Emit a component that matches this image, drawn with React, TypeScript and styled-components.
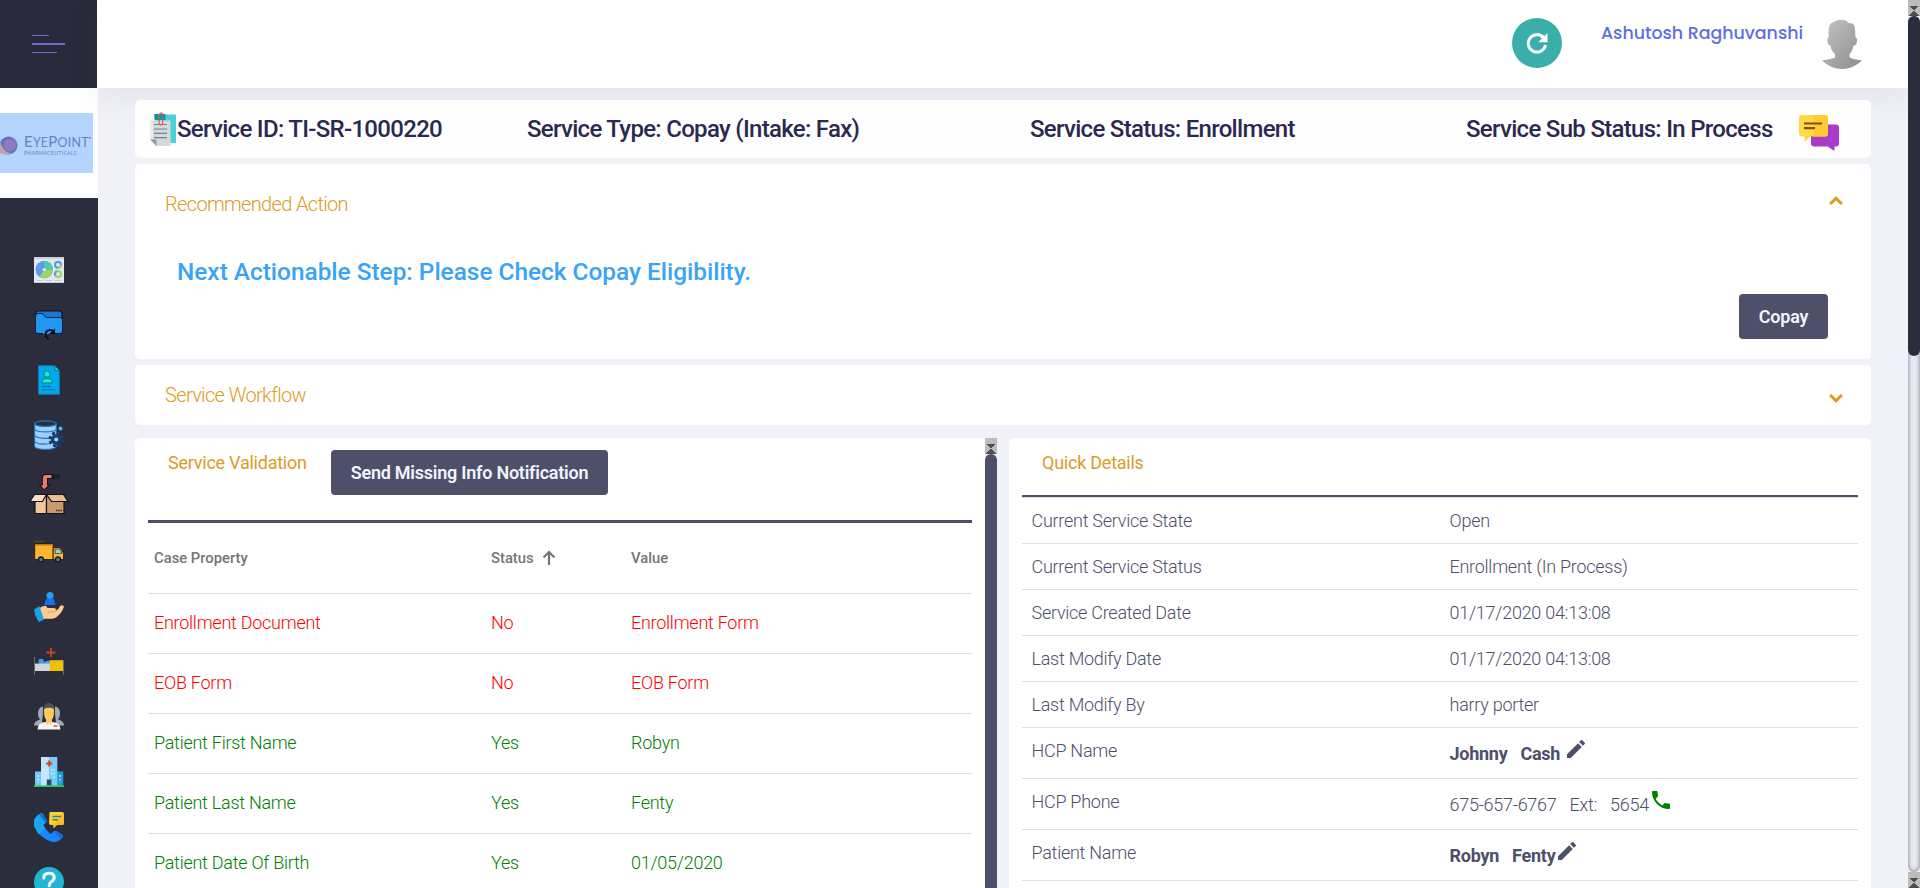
import React from 'react';
import styled, { createGlobalStyle } from 'styled-components';

const gold = '#da9d26';
const slate = '#4e4f69';
const navy = '#2c2d3c';

const Global = createGlobalStyle`
  *, *::before, *::after { box-sizing: border-box; }
  html, body { margin: 0; height: 888px; overflow: hidden; }
  body { font-family: Roboto, "Liberation Sans", sans-serif; background: #f1f2f8; color: ${slate}; font-size: 18px; }
`;

const Shell = styled.div`
  display: flex;
  height: 888px;
  overflow: hidden;
`;

const Sidebar = styled.aside`
  width: 98px;
  flex: none;
  background: ${navy};
  display: flex;
  flex-direction: column;
`;

const MenuToggle = styled.button`
  width: 97px;
  height: 88px;
  flex: none;
  border: 0;
  background: #28293a;
  padding: 35px 0 0 32px;
  display: flex;
  flex-direction: column;
  align-items: flex-start;
`;

const MenuBar = styled.span<{ $w: number; $h: number; $gap: number }>`
  width: ${p => p.$w}px;
  height: ${p => p.$h}px;
  margin-bottom: ${p => p.$gap}px;
  background: #7366cf;
`;

const LogoArea = styled.div`
  height: 110px;
  flex: none;
  background: #fff;
  display: flex;
  align-items: center;
`;

const Logo = styled.div`
  width: 93px;
  height: 60px;
  background: #b3d4fc;
  display: flex;
  align-items: center;
  gap: 6px;
  padding-top: 4px;
  overflow: hidden;
  svg { flex: none; }
`;

const LogoWords = styled.div`
  display: flex;
  flex-direction: column;
  color: #6b80c0;
  font-family: Lato, sans-serif;
  line-height: 1;
  white-space: nowrap;
`;

const LogoName = styled.div`
  font-size: 12.5px;
  letter-spacing: 0.2px;
  b { font-weight: 400; font-size: 15px; }
  sup { font-size: 4px; color: #b06bb5; vertical-align: 8px; line-height: 0; letter-spacing: 0; }
`;

const LogoTag = styled.div`
  font-size: 5px;
  letter-spacing: 0.35px;
  margin-top: 1px;
`;

const Nav = styled.nav`
  padding-top: 57px;
  display: flex;
  flex-direction: column;
  align-items: center;
  gap: 25px;
`;

const NavItem = styled.a<{ $h?: number }>`
  height: ${p => p.$h ?? 30}px;
  flex: none;
  display: flex;
  align-items: center;
  justify-content: center;
  svg { flex: none; display: block; }
`;

const Main = styled.div`
  flex: 1;
  min-width: 0;
  display: flex;
  flex-direction: column;
`;

const TopBar = styled.header`
  height: 88px;
  flex: none;
  margin-left: -1px;
  background: #fff;
  box-shadow: 0 10px 30px rgba(69, 65, 78, 0.08);
  display: flex;
  justify-content: flex-end;
  align-items: flex-start;
  padding: 18px 46px 0 0;
`;

const RefreshButton = styled.button`
  width: 50px;
  height: 50px;
  border: 0;
  border-radius: 50%;
  background: #3aafa9;
  padding: 0;
  display: grid;
  place-items: center;
`;

const UserName = styled.span`
  width: 203px;
  margin: 3px 18px 0 39px;
  font: 500 17.4px/24px Poppins, Inter, sans-serif;
  color: #5d6ee0;
  white-space: nowrap;
`;

const Avatar = styled.svg`
  margin-top: 1px;
  display: block;
`;

const Content = styled.main`
  flex: 1;
  min-height: 0;
  padding: 12px 37px 0;
  display: flex;
  flex-direction: column;
`;

const Card = styled.section`
  background: #fff;
  border-radius: 5px;
  flex: none;
`;

const SummaryBar = styled(Card)`
  height: 58px;
  margin-bottom: 6px;
  display: grid;
  grid-template-columns: 378px 503px 436px 333px 1fr;
  align-items: center;
  padding-left: 14px;
  background: rgba(255, 255, 255, 0.93);
`;

const SummaryItem = styled.div<{ $drop?: number }>`
  display: flex;
  align-items: center;
  padding-top: ${p => p.$drop ?? 0}px;
  font-size: 24px;
  font-weight: 500;
  letter-spacing: -0.7px;
  line-height: 28px;
  color: #2b2950;
  white-space: nowrap;
  svg { flex: none; }
`;

const ActionCard = styled(Card)`
  height: 195px;
  margin-bottom: 6px;
  display: flex;
  flex-direction: column;
`;

const CardHead = styled.div<{ $top: number; $icon: number }>`
  display: flex;
  justify-content: space-between;
  padding: ${p => p.$top}px 28px 0 30px;
  svg { margin-top: ${p => p.$icon}px; }
`;

const CardTitle = styled.h3`
  margin: 0;
  font-size: 20px;
  font-weight: 300;
  letter-spacing: -0.66px;
  line-height: 24px;
  color: ${gold};
  white-space: nowrap;
`;

const NextStep = styled.p`
  margin: 42px 0 0 42px;
  font-size: 24.4px;
  font-weight: 500;
  line-height: 28px;
  color: #38a3f8;
`;

const Button = styled.button<{ $w: number }>`
  width: ${p => p.$w}px;
  height: 45px;
  flex: none;
  border: 0;
  border-radius: 4px;
  padding: 0;
  background: ${slate};
  color: #f0f5ff;
  font: 600 18px/46px Roboto, sans-serif;
  letter-spacing: -0.24px;
  white-space: nowrap;
`;

const ActionFoot = styled.div`
  display: flex;
  justify-content: flex-end;
  padding: 8px 43px 0 0;
`;

const WorkflowCard = styled(Card)`
  height: 60px;
  margin-bottom: 13px;
`;

const Panels = styled.div`
  flex: 1;
  min-height: 0;
  display: grid;
  grid-template-columns: 862px 862px;
  grid-template-rows: 100%;
  gap: 12px;
  overflow: hidden;
`;

const ValidationPanel = styled.section`
  background: #fff;
  border-radius: 5px 0 0 0;
  display: flex;
  overflow: hidden;
`;

const ValidationBody = styled.div`
  flex: 1;
  padding: 12px 13px 0;
`;

const ValidationHead = styled.div`
  display: flex;
  height: 70px;
  padding-left: 20px;
`;

const PanelTitle = styled.h3<{ $w?: number }>`
  margin: 0;
  width: ${p => (p.$w ? p.$w + 'px' : 'auto')};
  font-size: 18px;
  font-weight: 400;
  letter-spacing: -0.24px;
  line-height: 26px;
  color: ${gold};
  white-space: nowrap;
`;

const Table = styled.div`
  border-top: 3px solid ${slate};
`;

const HeadRow = styled.div`
  height: 71px;
  display: grid;
  grid-template-columns: 337px 140px 1fr;
  align-items: center;
  padding-left: 6px;
  border-bottom: 1px solid #dedede;
  font-size: 14.8px;
  font-weight: 500;
  color: #757575;
`;

const HeadCell = styled.span`
  display: flex;
  align-items: center;
  gap: 8px;
  svg { margin-top: -2px; }
`;

const Row = styled.div<{ $ok: boolean }>`
  height: 60px;
  display: grid;
  grid-template-columns: 337px 140px 1fr;
  align-items: center;
  padding: 0 0 2px 6px;
  border-bottom: 1px solid #dedede;
  font-weight: 300;
  letter-spacing: -0.26px;
  color: ${p => (p.$ok ? '#008000' : '#ff0000')};
`;

const DetailsPanel = styled.section`
  background: #fff;
  border-radius: 5px 5px 0 0;
  padding: 12px 13px 0;
  overflow: hidden;
`;

const DetailsHead = styled.div`
  height: 47px;
  padding-left: 20px;
  border-bottom: 2px solid ${slate};
`;

const DetailList = styled.dl`
  margin: 0;
  border-top: 1px solid #dedede;
`;

const Detail = styled.div<{ $tall?: boolean }>`
  height: ${p => (p.$tall ? 51 : 46)}px;
  display: grid;
  grid-template-columns: 418px 1fr;
  padding: 11px 0 0 9.5px;
  border-bottom: 1px solid #dedede;
  font-weight: 300;
  letter-spacing: -0.26px;
  line-height: 23px;
  dt, dd { margin: 0; }
`;

const Value = styled.dd<{ $tall?: boolean; $bold?: boolean }>`
  display: flex;
  padding-top: ${p => (p.$tall ? 3 : 0)}px;
  font-weight: ${p => (p.$bold ? 700 : 300)};
  white-space: pre;
  svg { margin-top: -5px; }
`;

const Gap = styled.span<{ $w: number }>`
  width: ${p => p.$w}px;
`;

const Scrollbar = styled.div`
  width: 12px;
  flex: none;
  display: flex;
  flex-direction: column;
  background: #f1f2f8;
  svg { flex: none; display: block; }
`;

const ScrollTrack = styled.div`
  flex: 1;
  border-radius: 6px;
  box-shadow: inset 0 0 5px #74748a;
  background: #ebecf3;
`;

const ScrollThumb = styled.div<{ $h: string; $color: string }>`
  height: ${p => p.$h};
  flex: none;
  border-radius: 6px;
  background: ${p => p.$color};
`;

const ScrollArrows = () => (
  <svg width="12" height="16" viewBox="0 0 12 16" shapeRendering="crispEdges">
    <rect width="12" height="16" fill="#bcbcbc" />
    <path d="M2 6h8L6 10.5zM6 10l5.5 6H.5z" fill="#4e4e4e" />
  </svg>
);

const Icon24 = ({ d, color }: { d: string; color: string }) => (
  <svg width="24" height="24" viewBox="0 0 24 24" fill={color}><path d={d} /></svg>
);
const editPath = 'M3 17.25V21h3.75L17.81 9.94l-3.75-3.75L3 17.25zM20.71 7.04a.996.996 0 0 0 0-1.41l-2.34-2.34a.996.996 0 0 0-1.41 0l-1.83 1.83 3.75 3.75 1.83-1.83z';
const phonePath = 'M6.62 10.79c1.44 2.83 3.76 5.14 6.59 6.59l2.2-2.2c.27-.27.67-.36 1.02-.24 1.12.37 2.33.57 3.57.57.55 0 1 .45 1 1V20c0 .55-.45 1-1 1-9.39 0-17-7.61-17-17 0-.55.45-1 1-1h3.5c.55 0 1 .45 1 1 0 1.25.2 2.45.57 3.57.11.35.03.74-.25 1.02l-2.2 2.2z';

const Chevron = ({ up }: { up?: boolean }) => (
  <svg width="14" height="9" viewBox="0 0 14 9" fill="none" stroke={gold} strokeWidth="3">
    <path d={up ? 'M1.2 8L7 2.2 12.8 8' : 'M1.2 1L7 6.8 12.8 1'} />
  </svg>
);

const svg30 = { width: 30, height: 30, viewBox: '0 0 30 30' };

const ReportIcon = () => (
  <svg {...svg30}>
    <rect x="0" y="2" width="30" height="26" fill="#e6e8ef" />
    <path d="M0 2h30v2H0zM0 27h30v1H0z" fill="#cdd0db" />
    <circle cx="10.2" cy="14.5" r="8.7" fill="#5d9cec" />
    <path d="M10.2 14.5V5.8a8.7 8.7 0 0 1 8.7 8.7z" fill="#48cfad" />
    <path d="M10.2 14.5h8.7a8.7 8.7 0 0 1-13.2 7.4z" fill="#a0d468" />
    <circle cx="10.2" cy="14.5" r="1.6" fill="#e6e8ef" />
    <circle cx="24" cy="9.8" r="3" fill="none" stroke="#5d9cec" strokeWidth="2.2" />
    <path d="M24 12.8a3 3 0 0 0 3-3" fill="none" stroke="#a0d468" strokeWidth="2.2" />
    <circle cx="24" cy="19" r="3" fill="none" stroke="#a0d468" strokeWidth="2.2" />
    <path d="M21.2 20.5a3 3 0 0 1 2-4.3" fill="none" stroke="#5d9cec" strokeWidth="2.2" />
    <path d="M3 25.5h6M12 25.5h6M21 25.5h6" stroke="#c5c8d4" strokeWidth="1" />
  </svg>
);

const FolderIcon = () => (
  <svg {...svg30}>
    <path d="M3 1h22.5q2.5 0 2.5 2.5V9H2V2z" fill="#1976d2" stroke="#0d0f1a" strokeWidth="1.2" />
    <path d="M1.5 6.5Q1.5 3.5 4 3.5h3.5Q9 3.5 10 5.5T12.500 7.500H26q2.500 0 2.500 2.500v11q0 2.500-2.500 2.500H4Q1.500 23.500 1.500 21z" fill="#2196f3" stroke="#0d0f1a" strokeWidth=".8" />
    <path d="M9 24q0-5.500 6-5.500t6 5.500z" fill="#2196f3" />
    <path d="M14.800 29a4.600 4.600 0 1 1 4.700-7.500" fill="none" stroke="#0d0f1a" strokeWidth="2" />
    <path d="M21 18.500v5.500h-6z" fill="#0d0f1a" />
  </svg>
);

const ProfileDocIcon = () => (
  <svg {...svg30}>
    <path d="M4.500.700h16.500l4.500 5v23.600h-21z" fill="#00a8f0" stroke="#0579a8" strokeWidth="1" />
    <path d="M21 .700v5h4.500z" fill="#12efc0" stroke="#0b5f70" strokeWidth=".8" />
    <circle cx="13" cy="9" r="3.2" fill="#12efc0" stroke="#076b86" strokeWidth=".9" />
    <path d="M7.500 18q0-4.500 5.500-4.500t5.500 4.500z" fill="#12efc0" stroke="#076b86" strokeWidth=".9" />
    <path d="M7.500 21.500h9M7.500 24.800h14.500" stroke="#046d96" strokeWidth="1" />
  </svg>
);

const DatabaseIcon = () => (
  <svg {...svg30}>
    <path d="M.700 4v22.500c0 3.800 21.500 3.800 21.500 0V4z" fill="#a4cdff" stroke="#1b78c4" strokeWidth="1" />
    <ellipse cx="11.500" cy="3.700" rx="10.800" ry="2.800" fill="#2c2d3c" stroke="#1b78c4" strokeWidth="1.2" />
    <path d="M.700 9.500c2 3.200 19.500 3.200 21.500 0M.700 15.500c2 3.200 13 3.200 15 2.500M.700 21.500c2 3 12 3 15 2" fill="none" stroke="#1b78c4" strokeWidth="1.3" />
    <circle cx="26.500" cy="8.500" r="2" fill="#7db9f5" stroke="#1c5c96" strokeWidth="1" />
    <circle cx="22.200" cy="19.500" r="6.300" fill="none" stroke="#163f66" strokeWidth="3" strokeDasharray="2.9 2.05" />
    <circle cx="22.200" cy="19.500" r="3.700" fill="#a4cdff" stroke="#163f66" strokeWidth="3.2" />
  </svg>
);

const BoxIcon = () => (
  <svg width="40" height="42" viewBox="0 0 40 42">
    <path d="M15.200 17l-4.500-5h2.600V5q0-3.500 3.500-3.500H23v4h-4.500V12h2.200z" fill="#f2766a" stroke="#11121a" strokeWidth="1.1" />
    <path d="M23.500 1h7v5h-7z" fill="#15161f" />
    <path d="M26 1v5M28.300 1v5" stroke="#3d3e4c" strokeWidth=".6" />
    <path d="M6 22h11.500v18.500H6z" fill="#f0c69b" stroke="#11121a" strokeWidth="1.2" />
    <path d="M17.500 22H35v18.500H17.500z" fill="#c99a70" stroke="#11121a" strokeWidth="1.2" />
    <path d="M5.500 21.500H17.500L13.500 28.500H1z" fill="#f3e1cd" stroke="#11121a" strokeWidth="1.2" />
    <path d="M17.500 21.500H34.500L39 28.500H22.500z" fill="#e9bc93" stroke="#11121a" strokeWidth="1.2" />
    <path d="M27 37.500h6" stroke="#40301f" strokeWidth="1.4" strokeDasharray="1.5 .7" />
  </svg>
);

const TruckIcon = () => (
  <svg {...svg30}>
    <path d="M0 4.500h10" stroke="#4a4a55" strokeWidth="1.3" />
    <path d="M.700 6.500h18.500v16H.700z" fill="#fdb62f" stroke="#33230c" strokeWidth="1" />
    <path d="M1 7h18v1.500H1z" fill="#b9761d" />
    <path d="M19.200 10.500h6.300q2.800 2.500 4 6v6H19.200z" fill="#fdb62f" stroke="#33230c" strokeWidth="1" />
    <path d="M21.200 12h4q2 1.800 2.700 4.500h-6.700z" fill="#8cd3e2" stroke="#27414a" strokeWidth=".8" />
    <circle cx="7" cy="22.500" r="2.500" fill="#2f7fa8" stroke="#101c28" strokeWidth="1.3" />
    <circle cx="24" cy="22.500" r="2.500" fill="#2f7fa8" stroke="#101c28" strokeWidth="1.3" />
  </svg>
);

const HandIcon = () => (
  <svg {...svg30}>
    <circle cx="16" cy="3.500" r="3.500" fill="#1ea4f2" />
    <path d="M12.700 6q3.300 2 6.300 0 2.500 3 2.400 7H10.500q0-4 2.200-7z" fill="#146ff2" />
    <path d="M5 17q3-3.500 7-3.300l1.500 2.300h6.800q2 .500 1.700 2.300 2.500-.5 4-4 1.500-2 4 0-1.500 6-7 10.500-1.500 1.700-4.500 1.900H11L8 28z" fill="#ffc993" />
    <path d="M14 20h7.500q1-1 .8-2" fill="none" stroke="#e39b57" strokeWidth="1" />
    <path d="M0 17.500l5.500-3.300L10 27.500 5 30q-4-5-5-12.500z" fill="#1ba5dc" />
  </svg>
);

const BedIcon = () => (
  <svg {...svg30}>
    <path d="M17 1v9M12.500 5.500h9" stroke="#dc4012" strokeWidth="1.8" />
    <circle cx="7.200" cy="14.500" r="2.8" fill="#3d9bf5" />
    <path d="M9.500 17q0-3.500 6.500-3.500v4z" fill="#3d9bf5" />
    <path d="M0 16.500h16v7.500H0z" fill="#d3d3dc" />
    <path d="M15.800 13.200H30V24H15.800z" fill="#edc100" />
    <path d="M.500 10v18M29.500 13v15" stroke="#6c6b62" strokeWidth="1" />
  </svg>
);

const TeamIcon = () => (
  <svg {...svg30}>
    <path d="M9 4.500q-5 1-5 7 0 4 2 6-6 1.500-6 6h9zM21 4.500q5 1 5 7 0 4-2 6 6 1.500 6 6h-9z" fill="#a2a9b1" />
    <path d="M9.500 7h11l1.500 13.500H8z" fill="#2c2d3c" />
    <path d="M3.500 27.500q0-7 8-7.500h7q8 .5 8 7.500z" fill="#f5f5f5" />
    <path d="M10 8q0-6.500 5-6.500T20 8q0 8-2 9.500v3.500l-3 3.500-3-3.500v-3.500q-2-1.500-2-9.500z" fill="#fccb57" />
    <path d="M9.800 7q0-5.700 5-5.700T20 7q-5-2.500-10.200 0z" fill="#3c5561" />
    <path d="M15 19l1.200 5.500-1.200 1.500-1.200-1.500z" fill="#f5f5f5" />
    <path d="M19.500 24h4" stroke="#ef6a4d" strokeWidth="1.8" />
  </svg>
);

const HospitalIcon = () => (
  <svg {...svg30}>
    <path d="M1 14.500h8V29H1z" fill="#74c9f4" />
    <path d="M21 14.500h8.300V29H21z" fill="#1a9ad6" />
    <path d="M7 0h9v29H7z" fill="#bfe7fb" />
    <path d="M15 0h8.300v29H15z" fill="#77cdf6" />
    <path d="M15.200 3.500v6M12.200 6.500h6" stroke="#dc3d15" strokeWidth="2" />
    <path d="M10.500 12v9M13 12v7M17.500 12v7M20 12v9" stroke="#dff4fd" strokeWidth="1.1" strokeDasharray="1.8 1.8" />
    <path d="M4 18v8M26 18v8" stroke="#d9f3ff" strokeWidth="1.3" strokeDasharray="2 1.8" />
    <path d="M12.800 22.500h4.600v6h-4.600z" fill="#214a63" />
    <path d="M0 28.300h30v1.700H0z" fill="#35c454" />
  </svg>
);

const CallIcon = () => (
  <svg {...svg30}>
    <path d="M15.500 0h12.500q2 0 2 2v9q0 2-2 2h-5l-3.500 3.300V13h-2.500q-2 0-2-2z" fill="#fed22d" />
    <path d="M28 1.500q2 0 2 2V11q0 2-2 2h-5l-3.500 3.300V13z" fill="#fdb92b" />
    <path d="M18.500 4.500h8.500M18.500 7.800h5.500" stroke="#2d82a0" strokeWidth="1.5" />
    <path d="M6.500 1.500q1.700-.8 2.500.8l3.500 6q.5 1.500-1 2.500l-2.300 2.300q4 7 8 9l2.800-2.800q1.200-1 2.500-.2l5.800 3.700q1.300 1.200.2 2.700-4.500 5-9.500 4.500Q10.500 28 4 20.500T0 9q.5-4 6.500-7.500z" fill="#1a86fd" />
    <path d="M6.500 1.500q1.700-.8 2.500.8l3.500 6q.5 1.500-1 2.500l-2.300 2.300 2 3.400-6.500 6Q-.5 14 0 9q.5-4 6.500-7.500z" fill="#18a8ee" />
    <path d="M9 2.300l3.500 6q.5 1.500-1 2.500L5 2.500q2.500-2 4-.2zM28.500 22.800q1.300 1.200.2 2.700l-1.500 1.500-7-6.800 2-1.300z" fill="#1668e0" />
  </svg>
);

const HelpIcon = () => (
  <svg {...svg30}>
    <circle cx="15" cy="15" r="15" fill="#22b5d3" />
    <path d="M9.800 11q0-4.800 5.200-4.800t5.200 4.300q0 2.500-2.700 4.200-2.300 1.300-2.300 4" fill="none" stroke="#fff" strokeWidth="3" strokeLinecap="round" />
    <circle cx="15.200" cy="23.500" r="1.8" fill="#fff" />
  </svg>
);

const ClipboardIcon = () => (
  <svg width="28" height="34" viewBox="0 0 28 34">
    <path d="M5 2.500h22V31H12z" fill="#49d2dc" />
    <path d="M5.500 2h11v6h-11z" fill="#0795a8" />
    <path d="M1 8.500h20.500V34H8L1 27z" fill="#d4d9da" />
    <path d="M1 8.500h3V28H1z" fill="#e8ebec" />
    <path d="M1 27.500h6.500V34z" fill="#8f9c9f" />
    <path d="M5 12.500h13M5 17h13M5 21.300h13M5 25.700h13" stroke="#73858a" strokeWidth="1.2" />
    <path d="M13.700 3.500v8q-1.700 3-3.600 0V3q1.900-4 4-.5" fill="none" stroke="#e5534f" strokeWidth="1.1" />
  </svg>
);

const ChatIcon = () => (
  <svg width="40" height="37" viewBox="0 0 40 37">
    <path d="M15 9.500h22q3 0 3 3v16q0 3-3 3h-1.500V36l-7-4.500H15q-3 0-3-3v-16q0-3 3-3z" fill="#a83bc9" />
    <path d="M3 0h23q3 0 3 3v15.500q0 3-3 3H12L5.500 26.500v-5H3q-3 0-3-3V3Q0 0 3 0z" fill="#ffda44" />
    <path d="M14.500 0H26q3 0 3 3v15.500q0 3-3 3H14.500z" fill="#ffcb33" />
    <path d="M5 8.500h18M5 13.200h11" stroke="#8a4a10" strokeWidth="2.2" />
  </svg>
);

const navIcons = [ReportIcon, FolderIcon, ProfileDocIcon, DatabaseIcon, BoxIcon, TruckIcon, HandIcon, BedIcon, TeamIcon, HospitalIcon, CallIcon, HelpIcon];

const validations: [string, boolean, string][] = [
  ['Enrollment Document', false, 'Enrollment Form'],
  ['EOB Form', false, 'EOB Form'],
  ['Patient First Name', true, 'Robyn'],
  ['Patient Last Name', true, 'Fenty'],
  ['Patient Date Of Birth', true, '01/05/2020'],
];

const details: [string, string][] = [
  ['Current Service State', 'Open'],
  ['Current Service Status', 'Enrollment (In Process)'],
  ['Service Created Date', '01/17/2020 04:13:08'],
  ['Last Modify Date', '01/17/2020 04:13:08'],
  ['Last Modify By', 'harry porter'],
];

export default function App() {
  return (
    <>
      <Global />
      <Shell>
        <Sidebar>
          <MenuToggle aria-label="Toggle menu">
            <MenuBar $w={17} $h={1} $gap={7} />
            <MenuBar $w={33} $h={2} $gap={7} />
            <MenuBar $w={25} $h={1} $gap={0} />
          </MenuToggle>
          <LogoArea>
            <Logo>
              <svg width="18" height="19" viewBox="0 0 18 19">
                <circle cx="8.500" cy="9.500" r="9" fill="#5f78bd" />
                <path d="M0 5.500Q3 16 12 18 6 20 0 17z" fill="#c3a0a8" />
                <circle cx="10" cy="9" r="6" fill="#9278c4" />
              </svg>
              <LogoWords>
                <LogoName><b>E</b>YE<b>P</b>OINT<sup>●</sup></LogoName>
                <LogoTag>PHARMACEUTICALS</LogoTag>
              </LogoWords>
            </Logo>
          </LogoArea>
          <Nav>
            {navIcons.map((Glyph, i) => (
              <NavItem key={i} $h={Glyph === BoxIcon ? 37 : 30}><Glyph /></NavItem>
            ))}
          </Nav>
        </Sidebar>
        <Main>
          <TopBar>
            <RefreshButton aria-label="Refresh">
              <svg width="22" height="22" viewBox="0 0 22 22">
                <path d="M17.600 5.700A8.700 8.700 0 1 0 19.500 13" fill="none" stroke="#fff" strokeWidth="3" />
                <path d="M21.500 1v9.300h-9.300z" fill="#fff" />
              </svg>
            </RefreshButton>
            <UserName>Ashutosh Raghuvanshi</UserName>
            <Avatar width="40" height="50" viewBox="0 0 40 50">
              <defs>
                <linearGradient id="person" x1="0" y1="0" x2="1" y2="1">
                  <stop offset="0" stopColor="#c4c4c4" />
                  <stop offset="1" stopColor="#8c8c90" />
                </linearGradient>
              </defs>
              <path d="M7 18Q5 4 12 3q4-3 9-2 4 0 5 3 7-1 7 6l.5 8q2 1 1.500 4-.5 5-3.500 4.500-1 6-4 8.500v3.500Q30 40 40 41.500 31 50 20 50T0 41.500Q10 40 13 38.500V35q-4-3-4.500-8.500-2.500 0-3.200-4.500Q5 18 7 18z" fill="url(#person)" />
            </Avatar>
          </TopBar>
          <Content>
            <SummaryBar>
              <SummaryItem><ClipboardIcon />Service ID: TI-SR-1000220</SummaryItem>
              <SummaryItem>Service Type: Copay (Intake: Fax)</SummaryItem>
              <SummaryItem>Service Status: Enrollment</SummaryItem>
              <SummaryItem>Service Sub Status: In Process</SummaryItem>
              <SummaryItem $drop={8}><ChatIcon /></SummaryItem>
            </SummaryBar>
            <ActionCard>
              <CardHead $top={28} $icon={4}>
                <CardTitle>Recommended Action</CardTitle>
                <Chevron up />
              </CardHead>
              <NextStep>Next Actionable Step: Please Check Copay Eligibility.</NextStep>
              <ActionFoot><Button $w={89}>Copay</Button></ActionFoot>
            </ActionCard>
            <WorkflowCard>
              <CardHead $top={18} $icon={11}>
                <CardTitle>Service Workflow</CardTitle>
                <Chevron />
              </CardHead>
            </WorkflowCard>
            <Panels>
              <ValidationPanel>
                <ValidationBody>
                  <ValidationHead>
                    <PanelTitle $w={163}>Service Validation</PanelTitle>
                    <Button $w={277}>Send Missing Info Notification</Button>
                  </ValidationHead>
                  <Table>
                    <HeadRow>
                      <HeadCell>Case Property</HeadCell>
                      <HeadCell>
                        Status
                        <svg width="14" height="15" viewBox="0 0 14 15" fill="none" stroke="#757575" strokeWidth="2.2">
                          <path d="M7 15V2M1.500 7.500L7 2l5.500 5.500" />
                        </svg>
                      </HeadCell>
                      <HeadCell>Value</HeadCell>
                    </HeadRow>
                    {validations.map(([name, ok, value]) => (
                      <Row key={name} $ok={ok}>
                        <span>{name}</span>
                        <span>{ok ? 'Yes' : 'No'}</span>
                        <span>{value}</span>
                      </Row>
                    ))}
                  </Table>
                </ValidationBody>
                <Scrollbar>
                  <ScrollArrows />
                  <ScrollThumb $h="460px" $color={slate} />
                </Scrollbar>
              </ValidationPanel>
              <DetailsPanel>
                <DetailsHead><PanelTitle>Quick Details</PanelTitle></DetailsHead>
                <DetailList>
                  {details.map(([label, value]) => (
                    <Detail key={label}><dt>{label}</dt><Value>{value}</Value></Detail>
                  ))}
                  <Detail $tall>
                    <dt>HCP Name</dt>
                    <Value $tall $bold>Johnny<Gap $w={13} />Cash<Gap $w={4} /><Icon24 d={editPath} color={slate} /></Value>
                  </Detail>
                  <Detail $tall>
                    <dt>HCP Phone</dt>
                    <Value $tall>675-657-6767<Gap $w={13} />Ext:<Gap $w={13} />5654<Icon24 d={phonePath} color="#008000" /></Value>
                  </Detail>
                  <Detail $tall>
                    <dt>Patient Name</dt>
                    <Value $tall $bold>Robyn<Gap $w={13} />Fenty<Icon24 d={editPath} color={slate} /></Value>
                  </Detail>
                </DetailList>
              </DetailsPanel>
            </Panels>
          </Content>
        </Main>
        <Scrollbar>
          <ScrollArrows />
          <ScrollTrack><ScrollThumb $h="340px" $color={navy} /></ScrollTrack>
          <ScrollArrows />
        </Scrollbar>
      </Shell>
    </>
  );
}
